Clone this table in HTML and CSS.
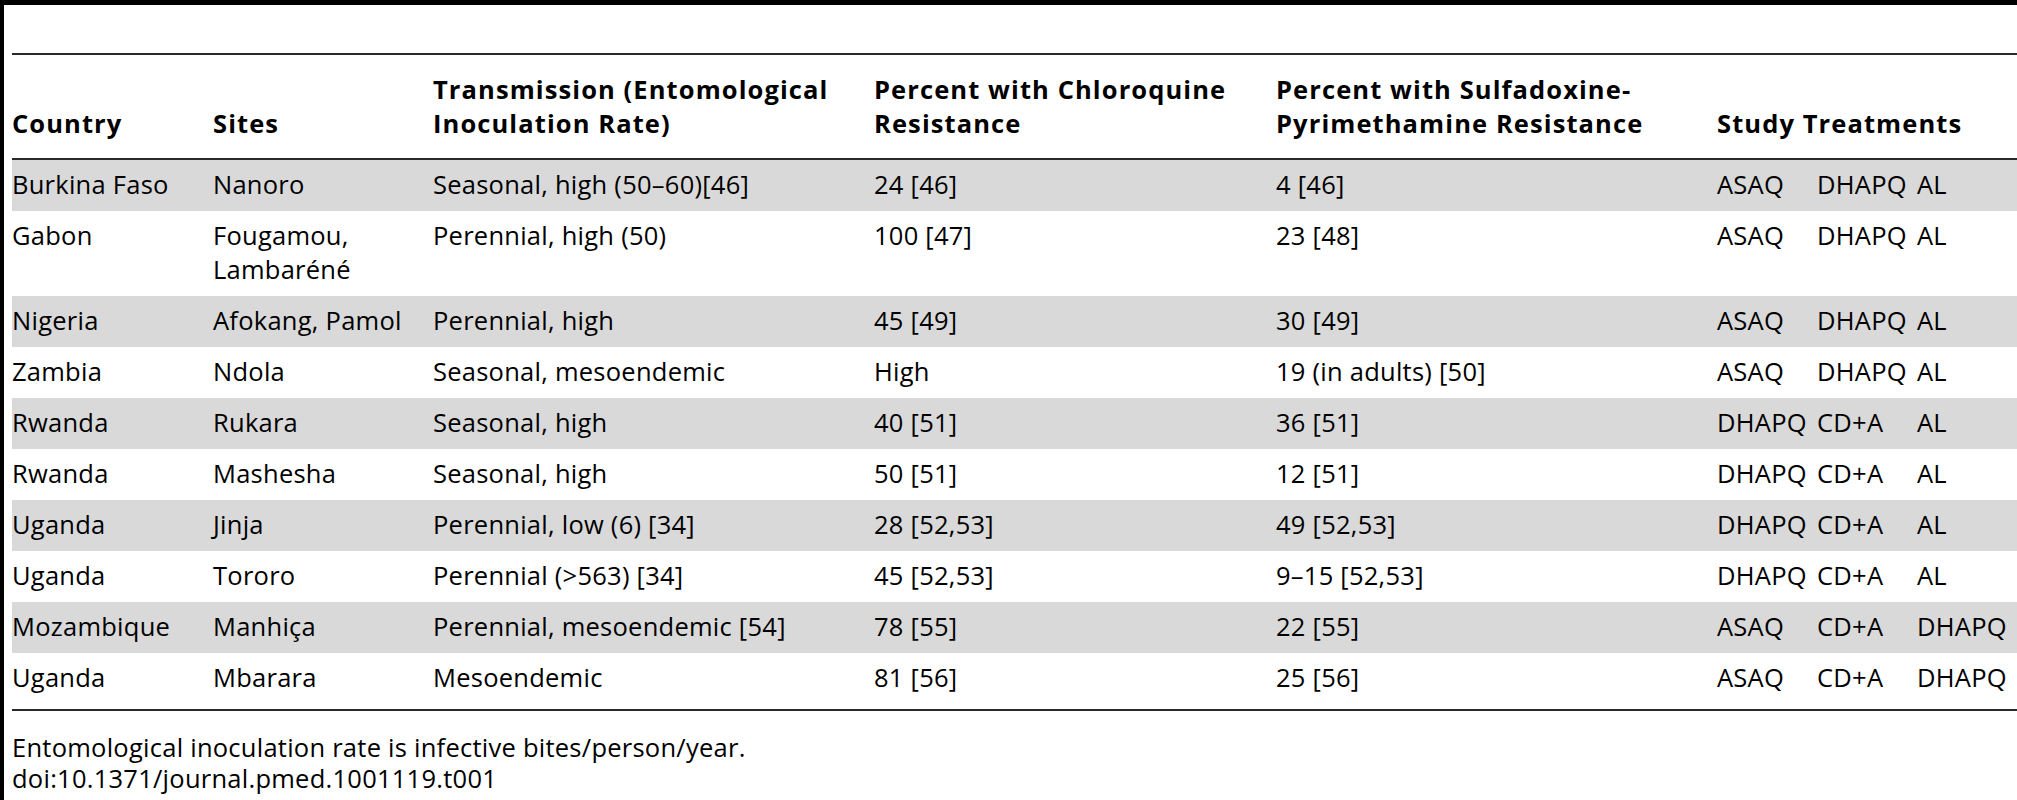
FILE: index.html
```html
<!DOCTYPE html>
<html lang="en">
<head>
<meta charset="utf-8">
<title>Table 1</title>
<link rel="stylesheet" href="styles.css">
</head>
<body>
<div class="page">
  <div class="top-rule"></div>
  <table class="data">
    <colgroup>
      <col class="c-country">
      <col class="c-sites">
      <col class="c-trans">
      <col class="c-cq">
      <col class="c-sp">
      <col class="c-tx">
    </colgroup>
    <thead>
      <tr>
        <th>Country</th>
        <th>Sites</th>
        <th>Transmission (Entomological<br>Inoculation Rate)</th>
        <th>Percent with Chloroquine<br>Resistance</th>
        <th>Percent with Sulfadoxine-<br>Pyrimethamine Resistance</th>
        <th>Study Treatments</th>
      </tr>
    </thead>
    <tbody>
      <tr class="shade">
        <td>Burkina Faso</td><td>Nanoro</td><td>Seasonal, high (50–60)[46]</td><td>24 [46]</td><td>4 [46]</td>
        <td><div class="tx"><span>ASAQ</span><span>DHAPQ</span><span>AL</span></div></td>
      </tr>
      <tr>
        <td>Gabon</td><td>Fougamou,<br>Lambaréné</td><td>Perennial, high (50)</td><td>100 [47]</td><td>23 [48]</td>
        <td><div class="tx"><span>ASAQ</span><span>DHAPQ</span><span>AL</span></div></td>
      </tr>
      <tr class="shade">
        <td>Nigeria</td><td>Afokang, Pamol</td><td>Perennial, high</td><td>45 [49]</td><td>30 [49]</td>
        <td><div class="tx"><span>ASAQ</span><span>DHAPQ</span><span>AL</span></div></td>
      </tr>
      <tr>
        <td>Zambia</td><td>Ndola</td><td>Seasonal, mesoendemic</td><td>High</td><td>19 (in adults) [50]</td>
        <td><div class="tx"><span>ASAQ</span><span>DHAPQ</span><span>AL</span></div></td>
      </tr>
      <tr class="shade">
        <td>Rwanda</td><td>Rukara</td><td>Seasonal, high</td><td>40 [51]</td><td>36 [51]</td>
        <td><div class="tx"><span>DHAPQ</span><span>CD+A</span><span>AL</span></div></td>
      </tr>
      <tr>
        <td>Rwanda</td><td>Mashesha</td><td>Seasonal, high</td><td>50 [51]</td><td>12 [51]</td>
        <td><div class="tx"><span>DHAPQ</span><span>CD+A</span><span>AL</span></div></td>
      </tr>
      <tr class="shade">
        <td>Uganda</td><td>Jinja</td><td>Perennial, low (6) [34]</td><td>28 [52,53]</td><td>49 [52,53]</td>
        <td><div class="tx"><span>DHAPQ</span><span>CD+A</span><span>AL</span></div></td>
      </tr>
      <tr>
        <td>Uganda</td><td>Tororo</td><td>Perennial (&gt;563) [34]</td><td>45 [52,53]</td><td>9–15 [52,53]</td>
        <td><div class="tx"><span>DHAPQ</span><span>CD+A</span><span>AL</span></div></td>
      </tr>
      <tr class="shade">
        <td>Mozambique</td><td>Manhiça</td><td>Perennial, mesoendemic [54]</td><td>78 [55]</td><td>22 [55]</td>
        <td><div class="tx"><span>ASAQ</span><span>CD+A</span><span>DHAPQ</span></div></td>
      </tr>
      <tr>
        <td>Uganda</td><td>Mbarara</td><td>Mesoendemic</td><td>81 [56]</td><td>25 [56]</td>
        <td><div class="tx"><span>ASAQ</span><span>CD+A</span><span>DHAPQ</span></div></td>
      </tr>
    </tbody>
  </table>
  <div class="notes">
    <p>Entomological inoculation rate is infective bites/person/year.</p>
    <p>doi:10.1371/journal.pmed.1001119.t001</p>
  </div>
</div>
</body>
</html>
```

FILE: styles.css
```css
html, body {
  margin: 0;
  padding: 0;
  background: #fff;
  overflow: hidden;
}

body {
  font-family: "Open Sans", "Liberation Sans", sans-serif;
  font-size: 25.5px;
  color: #000;
  letter-spacing: 0.25px;
}

.page {
  border-left: 4px solid #000;
  padding-left: 8px;
  height: 100vh;
  box-sizing: border-box;
}

.top-rule {
  height: 5px;
  background: #000;
  margin-left: -8px;
  margin-bottom: 48px;
}

.data {
  width: 2005px;
  border-collapse: separate;
  border-spacing: 0;
  table-layout: fixed;
}

.c-country { width: 201px; }
.c-sites { width: 220px; }
.c-trans { width: 441px; }
.c-cq { width: 402px; }
.c-sp { width: 441px; }
.c-tx { width: 300px; }

.data th,
.data td {
  padding: 0;
  text-align: left;
  line-height: 34px;
  white-space: nowrap;
}

.data th {
  font-weight: 700;
  letter-spacing: 1.1px;
  vertical-align: bottom;
  padding-top: 17px;
  padding-bottom: 18px;
  border-top: 2px solid #2a2a2a;
  border-bottom: 2px solid #2a2a2a;
}

.data td {
  font-weight: 400;
  vertical-align: top;
  padding-top: 7px;
  padding-bottom: 10px;
}

.data tr.shade td {
  background: #d9d9d9;
}

.data tbody tr:last-child td {
  padding-bottom: 15px;
  border-bottom: 2px solid #2a2a2a;
}

.tx {
  display: grid;
  grid-template-columns: 100px 100px 100px;
}

.notes {
  padding-top: 21px;
}

.notes p {
  margin: 0;
  line-height: 31px;
}
```
